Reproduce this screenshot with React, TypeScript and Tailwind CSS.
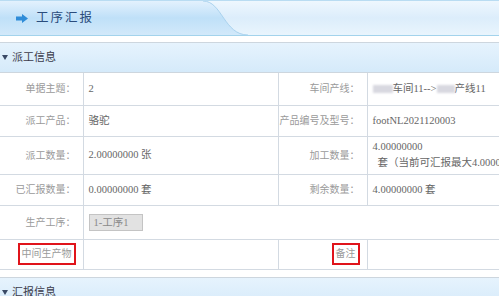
const font = { fontFamily: '"Liberation Serif", "Noto Sans CJK SC", serif' };

const Label = ({ children, boxed }: { children: React.ReactNode; boxed?: boolean }) => (
  <td className="border-r border-[#d3dae2] pr-[7px] text-right align-middle text-[10px] whitespace-nowrap text-[#9a9a9a]">
    {boxed ? (
      <span className="inline-block border-2 border-[#e0141b] px-[2px] leading-[18px]">{children}</span>
    ) : (
      children
    )}
  </td>
);

const Value = ({ children, span }: { children?: React.ReactNode; span?: number }) => (
  <td colSpan={span} className="border-r border-[#d3dae2] pl-[5px] align-middle text-[#666] whitespace-nowrap">
    {children}
  </td>
);

const SectionHeader = ({ title }: { title: string }) => (
  <div className="flex h-[31px] items-center gap-[4px] border-y border-[#cdd6de] bg-gradient-to-b from-[#e6f3fd] to-[#d5eafa] pl-[2px] text-[11px] text-[#3a3a4a]">
    <svg width="6" height="5" viewBox="0 0 6 5">
      <path d="M0 0 L6 0 L3 5 Z" fill="#3b4a66" />
    </svg>
    <span>{title}</span>
  </div>
);

export default function App() {
  return (
    <div className="w-[499px] h-[296px] overflow-hidden bg-white" style={font}>
      {/* title bar */}
      <div className="flex h-[36px] border-t border-b border-t-[#b9dcf2] border-b-[#a3d3ec] bg-gradient-to-b from-[#eef7fe] via-[#dcedfb] to-[#e9f5fd]">
        <div className="flex w-[200px] items-center gap-[8px] bg-gradient-to-b from-[#e3f1fd] via-[#bfe0f8] to-[#d2e9fa] pl-[16px]">
          <svg width="12" height="9" viewBox="0 0 12 9">
            <path d="M0 2.5 H6 V0 L12 4.5 L6 9 V6.5 H0 Z" fill="#2f8cd8" />
          </svg>
          <span className="text-[12.5px] tracking-[2px] text-[#2a4c7c]">工序汇报</span>
        </div>
        <svg width="50" height="34" viewBox="0 0 50 34" preserveAspectRatio="none">
          <defs>
            <linearGradient id="tab" x1="0" y1="0" x2="0" y2="1">
              <stop offset="0" stopColor="#e3f1fd" />
              <stop offset="0.5" stopColor="#bfe0f8" />
              <stop offset="1" stopColor="#d2e9fa" />
            </linearGradient>
          </defs>
          <path d="M0 0 H3 C22 0 24 34 48 34 H0 Z" fill="url(#tab)" />
          <path d="M3 0 C22 0 24 34 48 34" fill="none" stroke="#a9d2ee" strokeWidth="1" />
        </svg>
        <div className="flex-1" />
      </div>
      <div className="h-[6px]" />
      <SectionHeader title="派工信息" />
      <table className="w-[580px] table-fixed border-collapse text-[10.5px]">
        <colgroup>
          <col className="w-[83px]" />
          <col className="w-[195px]" />
          <col className="w-[89px]" />
          <col />
        </colgroup>
        <tbody>
          <tr className="h-[32px] border-b border-[#d3dae2]">
            <Label>单据主题：</Label>
            <Value>2</Value>
            <Label>车间产线：</Label>
            <Value>
              <span className="inline-block h-[8px] w-[20px] bg-[#d8d8e0] align-middle blur-[1px]" />
              车间11--&gt;
              <span className="inline-block h-[8px] w-[18px] bg-[#d8d8e0] align-middle blur-[1px]" />
              产线11
            </Value>
          </tr>
          <tr className="h-[31px] border-b border-[#d3dae2]">
            <Label>派工产品：</Label>
            <Value>骆驼</Value>
            <Label>产品编号及型号：</Label>
            <Value>footNL2021120003</Value>
          </tr>
          <tr className="h-[38px] border-b border-[#d3dae2]">
            <Label>派工数量：</Label>
            <Value>2.00000000 张</Value>
            <Label>加工数量：</Label>
            <Value>
              <div className="leading-[16px]">4.00000000</div>
              <div className="pl-[5px] leading-[16px]">套（当前可汇报最大4.00000000）</div>
            </Value>
          </tr>
          <tr className="h-[31px] border-b border-[#d3dae2]">
            <Label>已汇报数量：</Label>
            <Value>0.00000000 套</Value>
            <Label>剩余数量：</Label>
            <Value>4.00000000 套</Value>
          </tr>
          <tr className="h-[34px] border-b border-[#d3dae2]">
            <Label>生产工序：</Label>
            <Value span={3}>
              <span className="inline-block h-[17px] w-[54px] border border-[#c4c4c4] bg-[#e2e2e2] pl-[4px] leading-[15px] text-[#8a8a8a]">
                1-工序1
              </span>
            </Value>
          </tr>
          <tr className="h-[30px] border-b border-[#d3dae2]">
            <Label boxed>中间生产物</Label>
            <Value />
            <Label boxed>备注</Label>
            <Value />
          </tr>
        </tbody>
      </table>
      <div className="h-[7px]" />
      <SectionHeader title="汇报信息" />
    </div>
  );
}
